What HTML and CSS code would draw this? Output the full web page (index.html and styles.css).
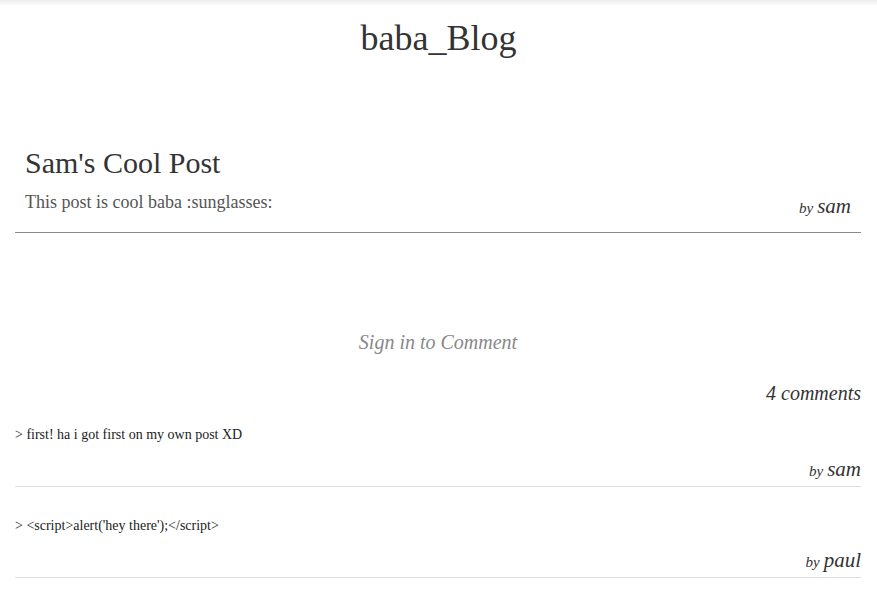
FILE: index.html
```html
<!DOCTYPE html>
<html>
<head>
<meta charset="utf-8">
<link rel="stylesheet" href="styles.css">
</head>
<body>
<div class="shade"></div>
<header class="site-head">
  <h1 class="site-title">baba_Blog</h1>
</header>
<main class="page">
  <article class="post">
    <h2 class="post-title">Sam's Cool Post</h2>
    <div class="post-row">
      <p class="post-body">This post is cool baba :sunglasses:</p>
      <div class="byline"><span class="by">by</span> <span class="author">sam</span></div>
    </div>
  </article>
  <div class="signin">Sign in to Comment</div>
  <div class="count">4 comments</div>
  <div class="comment">
    <p class="comment-text">&gt; first! ha i got first on my own post XD</p>
    <div class="byline"><span class="by">by</span> <span class="author">sam</span></div>
  </div>
  <div class="comment">
    <p class="comment-text">&gt; &lt;script&gt;alert('hey there');&lt;/script&gt;</p>
    <div class="byline"><span class="by">by</span> <span class="author">paul</span></div>
  </div>
</main>
</body>
</html>
```
FILE: styles.css
```css
html, body {
  margin: 0;
  padding: 0;
  background: #fff;
}
body {
  font-family: "Liberation Serif", "Times New Roman", serif;
  color: #333;
  overflow: hidden;
}
.shade {
  height: 6px;
  background: linear-gradient(#ececec, #fff);
}
.site-head {
  text-align: center;
}
.site-title {
  margin: 12px 0 0;
  font-size: 36px;
  font-weight: normal;
  line-height: 40px;
  color: #333;
}
.page {
  margin: 0 16px 0 15px;
}
.post {
  margin-top: 87px;
  padding: 0 10px 12px;
  border-bottom: 1px solid #888;
}
.post-title {
  margin: 0;
  font-size: 30px;
  font-weight: normal;
  line-height: 36px;
  color: #333;
}
.post-row {
  margin-top: 9px;
  display: flex;
  justify-content: space-between;
  align-items: flex-end;
}
.post-body {
  margin: 0 0 6px;
  font-size: 18px;
  line-height: 24px;
  color: #555;
}
.byline {
  font-style: italic;
  text-align: right;
  line-height: 24px;
  color: #333;
}
.by {
  font-size: 15px;
}
.author {
  font-size: 21px;
}
.signin {
  margin-top: 97px;
  text-align: center;
  font-style: italic;
  font-size: 20px;
  line-height: 24px;
  color: #888;
}
.count {
  margin-top: 27px;
  text-align: right;
  font-style: italic;
  font-size: 20px;
  line-height: 24px;
  color: #333;
}
.comment {
  padding-top: 20px;
  padding-bottom: 3px;
  border-bottom: 1px solid #ddd;
}
.comment + .comment {
  margin-top: 9px;
}
.comment-text {
  margin: 0;
  font-size: 14px;
  line-height: 20px;
  color: #222;
}
.comment .byline {
  margin-top: 12px;
}
```
